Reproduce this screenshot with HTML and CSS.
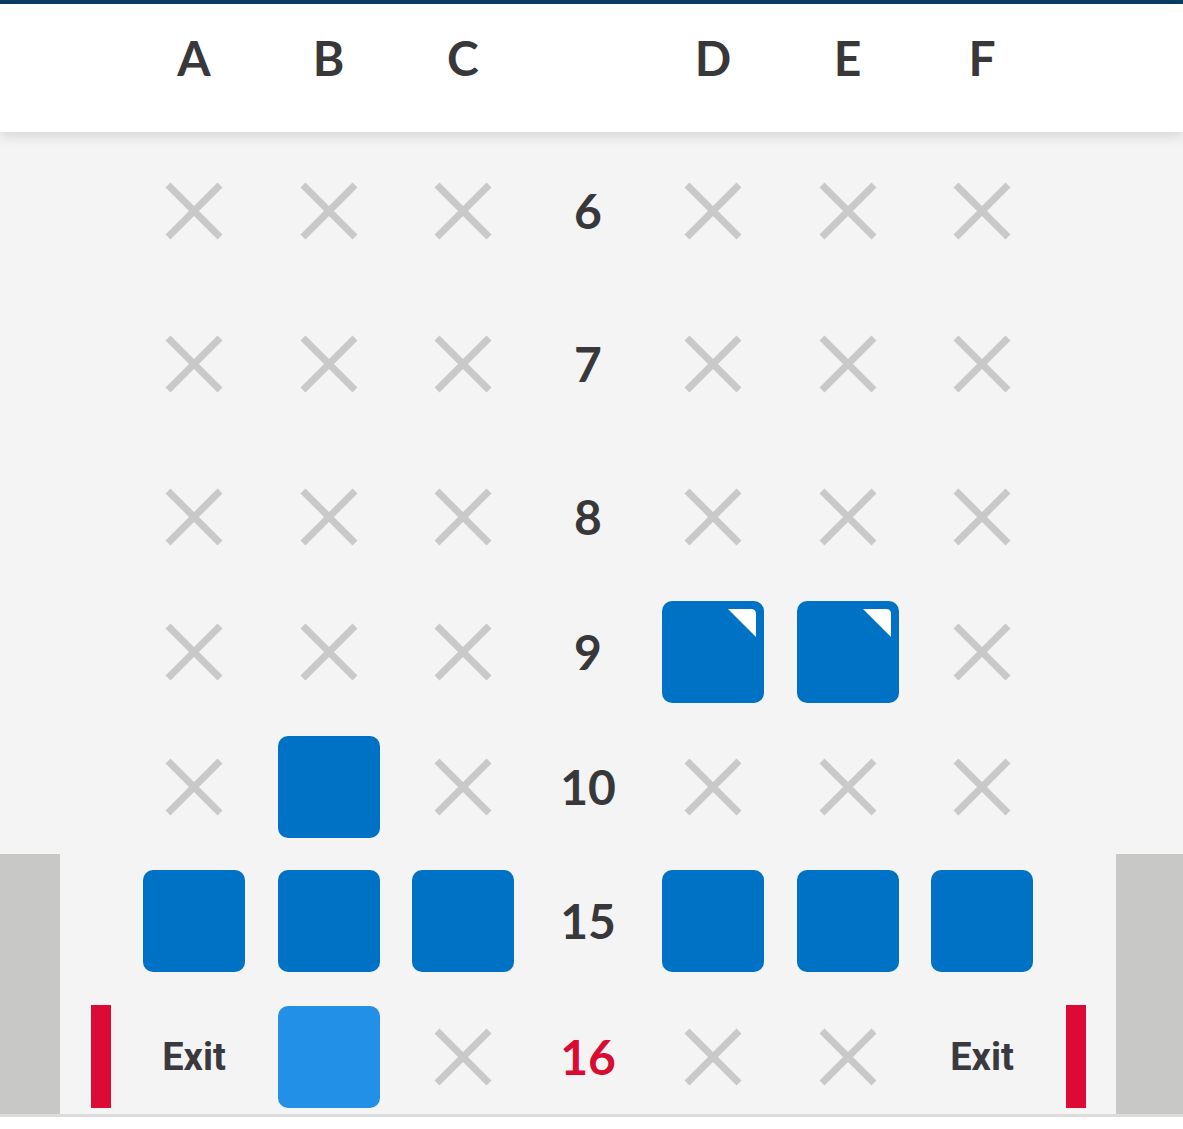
FILE: index.html
```html
<html lang="en">
<head>
    <meta charset="UTF-8">
    <meta name="viewport" content="width=device-width, initial-scale=1.0">
    <title>Seat Map</title>
    <link rel="stylesheet" href="styles.css">
</head>
<body>
    <svg class="defs" width="0" height="0">
        <symbol id="taken" viewBox="0 0 60 60">
            <path d="M4 4 L56 56 M56 4 L4 56" stroke="#c9c9c9" stroke-width="7" fill="none"/>
        </symbol>
    </svg>

    <div class="topbar"></div>

    <!-- Column letters -->
    <header class="columns">
        <div class="row">
            <span></span>
            <span class="letter">A</span>
            <span class="letter">B</span>
            <span class="letter">C</span>
            <span></span>
            <span class="letter">D</span>
            <span class="letter">E</span>
            <span class="letter">F</span>
            <span></span>
        </div>
    </header>

    <main class="cabin">
        <section class="zone zone-front">
            <div class="row">
                <span></span>
                <svg class="x"><use href="#taken"/></svg>
                <svg class="x"><use href="#taken"/></svg>
                <svg class="x"><use href="#taken"/></svg>
                <span class="num">6</span>
                <svg class="x"><use href="#taken"/></svg>
                <svg class="x"><use href="#taken"/></svg>
                <svg class="x"><use href="#taken"/></svg>
                <span></span>
            </div>
            <div class="row">
                <span></span>
                <svg class="x"><use href="#taken"/></svg>
                <svg class="x"><use href="#taken"/></svg>
                <svg class="x"><use href="#taken"/></svg>
                <span class="num">7</span>
                <svg class="x"><use href="#taken"/></svg>
                <svg class="x"><use href="#taken"/></svg>
                <svg class="x"><use href="#taken"/></svg>
                <span></span>
            </div>
            <div class="row">
                <span></span>
                <svg class="x"><use href="#taken"/></svg>
                <svg class="x"><use href="#taken"/></svg>
                <svg class="x"><use href="#taken"/></svg>
                <span class="num">8</span>
                <svg class="x"><use href="#taken"/></svg>
                <svg class="x"><use href="#taken"/></svg>
                <svg class="x"><use href="#taken"/></svg>
                <span></span>
            </div>
        </section>

        <section class="zone">
            <div class="row">
                <span></span>
                <svg class="x"><use href="#taken"/></svg>
                <svg class="x"><use href="#taken"/></svg>
                <svg class="x"><use href="#taken"/></svg>
                <span class="num">9</span>
                <button class="seat">
                    <svg class="corner" viewBox="0 0 28 28"><path d="M0 0 H23 Q28 0 28 5 V28 Z" fill="#fff"/></svg>
                </button>
                <button class="seat">
                    <svg class="corner" viewBox="0 0 28 28"><path d="M0 0 H23 Q28 0 28 5 V28 Z" fill="#fff"/></svg>
                </button>
                <svg class="x"><use href="#taken"/></svg>
                <span></span>
            </div>
            <div class="row">
                <span></span>
                <svg class="x"><use href="#taken"/></svg>
                <button class="seat"></button>
                <svg class="x"><use href="#taken"/></svg>
                <span class="num">10</span>
                <svg class="x"><use href="#taken"/></svg>
                <svg class="x"><use href="#taken"/></svg>
                <svg class="x"><use href="#taken"/></svg>
                <span></span>
            </div>
        </section>

        <!-- Exit rows -->
        <section class="exit-zone">
            <div class="wall"></div>
            <div class="exit-rows">
                <div class="row">
                    <span></span>
                    <button class="seat"></button>
                    <button class="seat"></button>
                    <button class="seat"></button>
                    <span class="num">15</span>
                    <button class="seat"></button>
                    <button class="seat"></button>
                    <button class="seat"></button>
                    <span></span>
                </div>
                <div class="row">
                    <span class="exit-bar"></span>
                    <span class="exit">Exit</span>
                    <button class="seat selected"></button>
                    <svg class="x"><use href="#taken"/></svg>
                    <span class="num exit-num">16</span>
                    <svg class="x"><use href="#taken"/></svg>
                    <svg class="x"><use href="#taken"/></svg>
                    <span class="exit">Exit</span>
                    <span class="exit-bar"></span>
                </div>
            </div>
            <div class="wall wall-right"></div>
        </section>
    </main>
</body>
</html>
```

FILE: styles.css
```css
body {
    font-family: Lato, "Open Sans", sans-serif;
    margin: 0;
    padding: 0;
    background-color: #fff;
    color: #38383b;
}
.defs {
    position: absolute;
}
.topbar {
    height: 4px;
    background-color: #0b3e64;
}
.columns {
    position: relative;
    z-index: 1;
    background: #fff;
    padding: 0 67px 20px 60px;
    box-shadow: 0 4px 12px rgba(0, 0, 0, 0.13);
}
.columns .row {
    height: 108px;
}
.row {
    display: grid;
    grid-template-columns: 20px repeat(3, 102px) 83px repeat(3, 102px) 20px;
    column-gap: 32.5px;
    justify-content: center;
    justify-items: center;
    align-items: center;
    height: 102px;
}
.letter,
.num {
    font-size: 48px;
    font-weight: 700;
    line-height: 1;
}
.cabin {
    background-color: #f4f4f4;
    padding-top: 28px;
    border-bottom: 3px solid #dcdcdc;
}
.zone {
    display: flex;
    flex-direction: column;
    gap: 33px;
    padding: 0 67px 33px 60px;
}
.zone-front {
    gap: 51px;
}
.x {
    width: 60px;
    height: 60px;
}
.seat {
    position: relative;
    width: 102px;
    height: 102px;
    padding: 0;
    border: none;
    border-radius: 10px;
    background-color: #0072c6;
    cursor: pointer;
}
.seat.selected {
    background-color: #2390e8;
}
.corner {
    position: absolute;
    top: 8px;
    right: 8px;
    width: 28px;
    height: 28px;
}
.exit-zone {
    display: flex;
    margin-top: -17px;
}
.wall {
    width: 60px;
    background-color: #c8c8c6;
}
.wall-right {
    width: 67px;
}
.exit-rows {
    flex: 1;
    display: flex;
    flex-direction: column;
    gap: 33px;
    padding: 16px 0 7px;
}
.exit {
    font-family: Roboto, "Liberation Sans", sans-serif;
    font-size: 38px;
    font-weight: 700;
    color: #3a3a3e;
}
.exit-bar {
    width: 20px;
    height: 103px;
    background-color: #dc0a34;
}
.exit-num {
    color: #d80c32;
}
```
